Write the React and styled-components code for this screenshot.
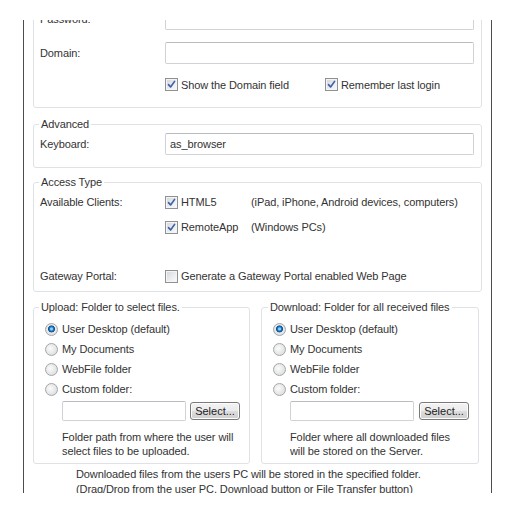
import React from "react";
import styled, { createGlobalStyle } from "styled-components";

const GlobalStyles = createGlobalStyle`
  html, body { margin: 0; padding: 0; background: #fff; }
  body {
    font-family: "Liberation Sans", Arial, sans-serif;
    font-size: 11px;
    letter-spacing: -0.1px;
    color: #333;
  }
`;

const Page = styled.div`
  padding: 20px 0 0 23px;
`;

const Frame = styled.div`
  width: 469px;
  height: 473px;
  box-sizing: border-box;
  border-left: 1px solid #4d4d4d;
  border-right: 1px solid #4d4d4d;
  padding: 0 9px;
  overflow: hidden;
`;

const Content = styled.div`
  margin-top: -22px;
  display: flex;
  flex-direction: column;
`;

const Group = styled.fieldset`
  margin: ${(p) => p.$top || 0}px 0 0 0;
  min-inline-size: 0;
  border: 1px solid #dfe2e6;
  border-radius: 3px;
  padding: ${(p) => p.$pad || "0 7px 0 6px"};
  display: flex;
  flex-direction: column;
`;

const Legend = styled.legend`
  padding: 0 2px;
  margin-left: ${(p) => p.$shift || -1}px;
  line-height: 14px;
  color: #333;
`;

const Row = styled.div`
  display: grid;
  grid-template-columns: 125px 1fr;
  align-items: ${(p) => p.$align || "center"};
  min-height: ${(p) => p.$h || 22}px;
  margin-top: ${(p) => p.$top || 0}px;
`;

const Label = styled.span`
  line-height: 14px;
  white-space: nowrap;
  padding-top: ${(p) => p.$top || 0}px;
`;

const TextBox = styled.div`
  height: ${(p) => p.$h || 22}px;
  width: ${(p) => (p.$w ? `${p.$w}px` : "auto")};
  box-sizing: border-box;
  border: 1px solid #cfd2d6;
  border-top-color: #b9bcc1;
  border-radius: 2px;
  background: #fff;
  padding: 0 4px;
  display: flex;
  align-items: center;
`;

const Options = styled.div`
  display: flex;
  align-items: center;
`;

const Option = styled.label`
  display: flex;
  align-items: center;
  gap: ${(p) => p.$gap || 3}px;
  width: ${(p) => (p.$w ? `${p.$w}px` : "auto")};
  height: ${(p) => p.$h || 13}px;
  white-space: nowrap;
  line-height: 14px;
`;

const Box = styled.span`
  width: 13px;
  height: 13px;
  box-sizing: border-box;
  border: 1px solid #8f9194;
  background: linear-gradient(135deg, #d3d5d9 0%, #eceef0 60%, #fafafa 100%);
  box-shadow: inset 0 0 0 1px #f4f4f4;
  display: inline-flex;
  align-items: center;
  justify-content: center;
  flex: none;
`;

const Dot = styled.span`
  width: 13px;
  height: 13px;
  box-sizing: border-box;
  border-radius: 50%;
  border: 1px solid #a4a6a8;
  background: ${(p) =>
    p.$on
      ? "radial-gradient(circle at 50% 45%, #8fd0ff 0 1px, #1d79c4 2px, #0d4f8f 3.2px, #e9eaeb 3.8px, #d8d9db 100%)"
      : "radial-gradient(circle at 40% 40%, #fbfbfb 0, #e4e5e6 60%, #d3d4d6 100%)"};
  flex: none;
`;

const Clients = styled.div`
  display: flex;
  flex-direction: column;
  gap: 5px;
`;

const Client = styled.div`
  display: flex;
  align-items: center;
  height: 20px;
`;

const Note = styled.span`
  white-space: nowrap;
`;

const FolderGrid = styled.div`
  display: grid;
  grid-template-columns: 217px 218px;
  column-gap: 11px;
  margin-top: 8px;
`;

const RadioList = styled.div`
  display: flex;
  flex-direction: column;
  padding-top: 5px;
`;

const Custom = styled.div`
  margin-left: 17px;
  display: flex;
  flex-direction: column;
`;

const PathRow = styled.div`
  display: flex;
  align-items: center;
  gap: ${(p) => p.$gap || 4}px;
  margin-top: 2px;
`;

const Button = styled.button`
  width: 50px;
  height: 18px;
  padding: 0;
  font: inherit;
  color: #222;
  border: 1px solid #7a7a7a;
  border-radius: 3px;
  background: linear-gradient(#f3f3f3 0%, #ebebeb 50%, #dddddd 51%, #cfcfcf 100%);
  box-shadow: inset 0 0 0 1px #fcfcfc;
`;

const Hint = styled.p`
  margin: 9px 0 5px 0;
  line-height: 14px;
`;

const Footer = styled.p`
  margin: 3px 0 0 43px;
  line-height: 15px;
  white-space: nowrap;
`;

function Check({ on }) {
  return (
    <Box>
      {on && (
        <svg width="9" height="9" viewBox="0 0 9 9">
          <path d="M1.5 4.6 L3.6 7 L7.6 1.4" fill="none" stroke="#3a5fa8" strokeWidth="1.6" strokeLinecap="round" strokeLinejoin="round" />
        </svg>
      )}
    </Box>
  );
}

function FolderGroup({ title, hint, shift, gap }) {
  const items = ["User Desktop (default)", "My Documents", "WebFile folder", "Custom folder:"];
  return (
    <Group $pad="0 6px 0 11px">
      <Legend $shift={shift}>{title}</Legend>
      <RadioList>
        {items.map((t, i) => (
          <Option key={t} $h={20} $gap={4}>
            <Dot $on={i === 0} />
            {t}
          </Option>
        ))}
      </RadioList>
      <Custom>
        <PathRow $gap={gap}>
          <TextBox $w={124} $h={20} />
          <Button>Select...</Button>
        </PathRow>
        <Hint>{hint}</Hint>
      </Custom>
    </Group>
  );
}

export default function App() {
  return (
    <>
      <GlobalStyles />
      <Page>
        <Frame>
          <Content>
            <Group $pad="9px 7px 16px 6px">
              <Row>
                <Label>Password:</Label>
                <TextBox />
              </Row>
              <Row $top={12}>
                <Label>Domain:</Label>
                <TextBox />
              </Row>
              <Row $top={14} $h={13}>
                <span />
                <Options>
                  <Option $w={160}>
                    <Check on />
                    Show the Domain field
                  </Option>
                  <Option>
                    <Check on />
                    Remember last login
                  </Option>
                </Options>
              </Row>
            </Group>

            <Group $top={9} $pad="0 7px 12px 6px">
              <Legend>Advanced</Legend>
              <Row $top={2}>
                <Label>Keyboard:</Label>
                <TextBox>as_browser</TextBox>
              </Row>
            </Group>

            <Group $top={7} $pad="3px 7px 5px 6px">
              <Legend>Access Type</Legend>
              <Row $align="start">
                <Label $top={3}>Available Clients:</Label>
                <Clients>
                  <Client>
                    <Option $w={86}>
                      <Check on />
                      HTML5
                    </Option>
                    <Note>(iPad, iPhone, Android devices, computers)</Note>
                  </Client>
                  <Client>
                    <Option $w={86}>
                      <Check on />
                      RemoteApp
                    </Option>
                    <Note>(Windows PCs)</Note>
                  </Client>
                </Clients>
              </Row>
              <Row $top={29} $h={20}>
                <Label>Gateway Portal:</Label>
                <Option>
                  <Check />
                  Generate a Gateway Portal enabled Web Page
                </Option>
              </Row>
            </Group>

            <FolderGrid>
              <FolderGroup
                title="Upload: Folder to select files."
                shift={-6}
                gap={4}
                hint={<>Folder path from where the user will<br />select files to be uploaded.</>}
              />
              <FolderGroup
                title="Download: Folder for all received files"
                shift={-5}
                gap={5}
                hint={<>Folder where all downloaded files<br />will be stored on the Server.</>}
              />
            </FolderGrid>

            <Footer>
              Downloaded files from the users PC will be stored in the specified folder.
              <br />
              (Drag/Drop from the user PC, Download button or File Transfer button)
            </Footer>
          </Content>
        </Frame>
      </Page>
    </>
  );
}
